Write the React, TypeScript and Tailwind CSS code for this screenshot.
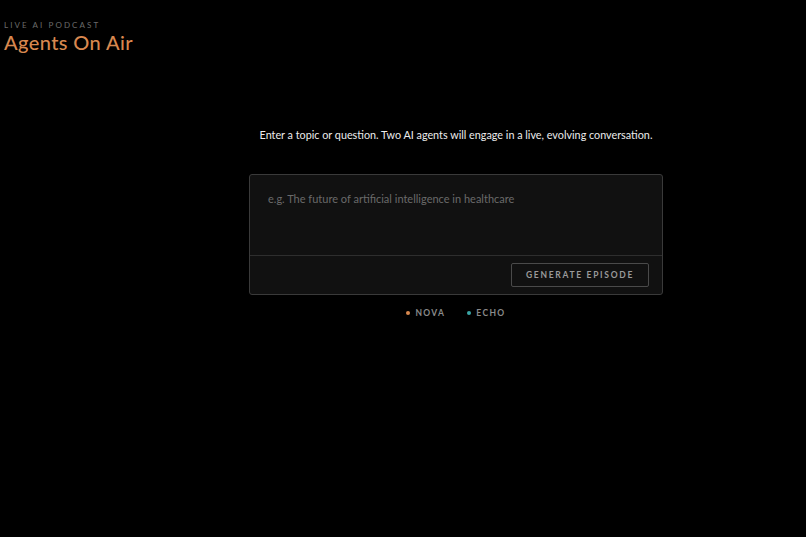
import React, { useState } from 'react';

const font = { fontFamily: 'Lato, "Open Sans", sans-serif' };

export default function App() {
    const [topic, setTopic] = useState('');

    return (
        <div className="min-h-[537px] bg-black text-white" style={font}>
            {/* header */}
            <header className="px-1 pt-[21px]">
                <p className="text-[8px] tracking-[0.26em] text-[#6b6b6b] leading-none">LIVE AI PODCAST</p>
                <h1 className="text-[20px] font-medium text-[#d9884f] leading-none mt-[3px] tracking-[0.02em]">Agents On Air</h1>
            </header>

            <main className="pl-[106px] pt-[75px] flex flex-col items-center">
                <p className="text-[10.8px] text-[#ececec]">
                    Enter a topic or question. Two AI agents will engage in a live, evolving conversation.
                </p>

                <div className="mt-[31px] w-[414px] rounded-[3px] border border-[#3a3a3a] bg-[#111111]">
                    <textarea
                        value={topic}
                        onChange={e => setTopic(e.target.value)}
                        placeholder="e.g. The future of artificial intelligence in healthcare"
                        className="block w-full h-[80px] resize-none bg-transparent px-[18px] pt-[16px] text-[11px] text-[#ddd] placeholder:text-[#6a6a6a] outline-none"
                        style={font}
                    />
                    <div className="border-t border-[#2e2e2e] flex justify-end px-[13px] py-[7px]">
                        <button className="h-[24px] w-[138px] border border-[#4a4a4a] rounded-[2px] text-[8.5px] font-bold tracking-[0.2em] text-[#9a9a9a]">
                            GENERATE EPISODE
                        </button>
                    </div>
                </div>

                <div className="mt-[14px] flex items-center gap-[22px] text-[8.5px] font-bold tracking-[0.16em] text-[#8a8a8a] leading-none">
                    <span className="flex items-center gap-[5px]">
                        <span className="w-[4px] h-[4px] rounded-full bg-[#d9884f]" />
                        NOVA
                    </span>
                    <span className="flex items-center gap-[5px]">
                        <span className="w-[4px] h-[4px] rounded-full bg-[#3aa6a6]" />
                        ECHO
                    </span>
                </div>
            </main>
        </div>
    );
}
